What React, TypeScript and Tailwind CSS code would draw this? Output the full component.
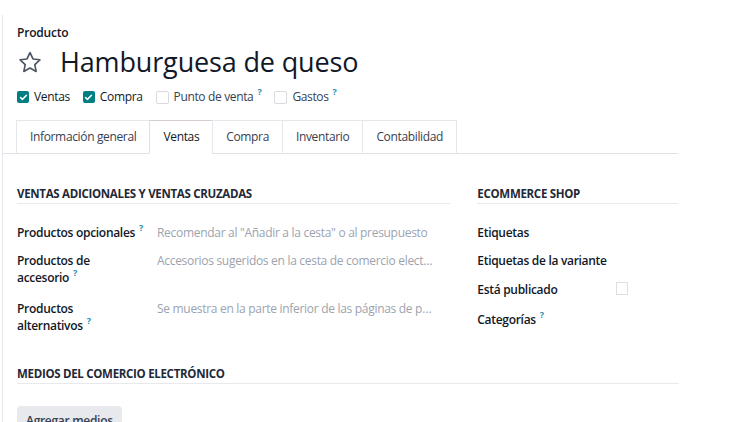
import { Check } from 'lucide-react';

const font = { fontFamily: '"Open Sans", "Noto Sans", sans-serif' };

function Help() {
  return <span className="relative -top-[6px] ml-[4px] text-[9px] font-bold leading-none text-[#1e8fb0]">?</span>;
}

function Box({ checked }: { checked?: boolean }) {
  if (checked) {
    return (
      <span className="flex h-[12px] w-[12px] items-center justify-center rounded-[2px] bg-[#017e84]">
        <Check className="h-[9px] w-[9px] text-white" strokeWidth={4} />
      </span>
    );
  }
  return <span className="block h-[13px] w-[13px] rounded-[2px] border border-[#d8dadd] bg-white" />;
}

function SectionTitle({ children }: { children: React.ReactNode }) {
  return (
    <div className="border-b border-[#e7e9ed] pb-[1px] text-[11.5px] font-bold uppercase leading-[16px] tracking-[-0.3px] text-[#1f2937]">
      {children}
    </div>
  );
}

export default function App() {
  const flags = [
    { label: 'Ventas', checked: true, help: false },
    { label: 'Compra', checked: true, help: false },
    { label: 'Punto de venta', checked: false, help: true },
    { label: 'Gastos', checked: false, help: true },
  ];
  const tabs = ['Información general', 'Ventas', 'Compra', 'Inventario', 'Contabilidad'];

  return (
    <div className="min-h-[422px] w-[740px] overflow-hidden bg-white pt-[15px] text-[#111827]" style={font}>
      <div className="ml-[2px] h-[407px] w-[676px] border-l border-[#e5e7eb]">
        {/* header */}
        <div className="pl-[14px] pt-[9px]">
          <div className="text-[12px] font-semibold leading-[18px] tracking-[-0.2px]">Producto</div>
          <div className="mt-[2px] flex h-[36px] items-center">
            <svg width="26" height="25" viewBox="0 0 24 24" fill="none" stroke="#4b5563" strokeWidth="1.6" strokeLinejoin="round">
              <path d="M12 2.5l2.9 6.1 6.6.8-4.9 4.6 1.3 6.6L12 17.3l-5.9 3.3 1.3-6.6-4.9-4.6 6.6-.8z" />
            </svg>
            <h1 className="ml-[17px] text-[27px] font-normal leading-[36px] tracking-[-0.15px] text-[#111827]">Hamburguesa de queso</h1>
          </div>
          <div className="mt-[7px] flex h-[20px] items-center text-[12px] tracking-[-0.35px]">
            {flags.map((f) => (
              <div key={f.label} className="mr-[13px] flex items-center">
                <Box checked={f.checked} />
                <span className={`ml-[5px] ${f.checked ? 'text-[#111827]' : 'text-[#374151]'}`}>{f.label}</span>
                {f.help && <Help />}
              </div>
            ))}
          </div>
        </div>

        {/* tabs */}
        <div className="mt-[13px] flex border-b border-[#dee2e6] pl-[14px]">
          {tabs.map((t) => (
            <div
              key={t}
              className={
                t === 'Ventas'
                  ? '-mb-px -ml-px flex h-[34px] items-center border border-[#dee2e6] border-t-[#d6cdd6] border-b-white bg-white px-[13px] text-[12px] tracking-[-0.35px] text-[#111827]'
                  : '-mb-px -ml-px flex h-[34px] items-center border border-[#e5e7eb] border-b-[#dee2e6] px-[13px] text-[12px] tracking-[-0.35px] text-[#374151]'
              }
            >
              {t}
            </div>
          ))}
        </div>

        {/* body */}
        <div className="pl-[14px] pt-[32px]">
          <div className="flex">
            <div className="w-[434px]">
              <SectionTitle>Ventas adicionales y ventas cruzadas</SectionTitle>
              <div className="mt-[20px] text-[12px] leading-[17px] tracking-[-0.3px]">
                <div className="flex h-[28px]">
                  <div className="w-[140px] whitespace-nowrap font-semibold">Productos opcionales<Help /></div>
                  <div className="w-[280px] truncate text-[#9ca3af]">Recomendar al "Añadir a la cesta" o al presupuesto</div>
                </div>
                <div className="flex h-[48px]">
                  <div className="w-[140px] font-semibold">Productos de<br />accesorio<Help /></div>
                  <div className="w-[278px] truncate text-[#9ca3af]">Accesorios sugeridos en la cesta de comercio electrónico</div>
                </div>
                <div className="flex h-[40px]">
                  <div className="w-[140px] font-semibold">Productos<br />alternativos<Help /></div>
                  <div className="w-[278px] truncate text-[#9ca3af]">Se muestra en la parte inferior de las páginas de producto</div>
                </div>
              </div>
            </div>
            <div className="ml-[27px] w-[201px]">
              <SectionTitle>eCommerce Shop</SectionTitle>
              <div className="mt-[20px] text-[12px] font-semibold leading-[17px] tracking-[-0.3px]">
                <div className="h-[28px]">Etiquetas</div>
                <div className="h-[29px]">Etiquetas de la variante</div>
                <div className="flex h-[30px]">
                  <div className="w-[139px]">Está publicado</div>
                  <span className="mt-[1px] block h-[13px] w-[12px] border border-[#dcdfe3]" />
                </div>
                <div>Categorías<Help /></div>
              </div>
            </div>
          </div>

          <div className="mt-[26px] w-[662px]">
            <SectionTitle>Medios del comercio electrónico</SectionTitle>
          </div>
          <button className="mt-[22px] h-[30px] rounded-[4px] bg-[#e7e9ed] px-[9px] text-[12px] font-semibold tracking-[-0.3px] text-[#374151]">
            Agregar medios
          </button>
        </div>
      </div>
    </div>
  );
}
